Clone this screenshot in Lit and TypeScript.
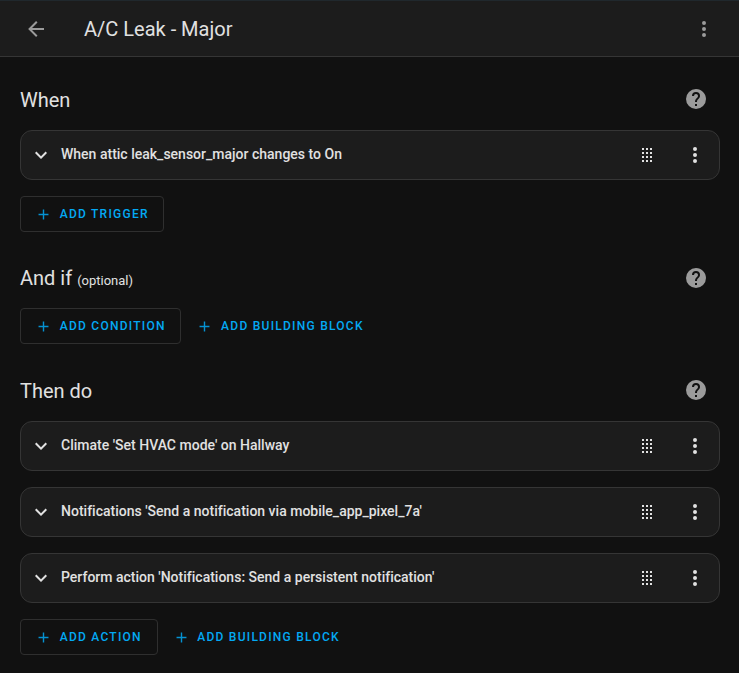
import { LitElement, html, css, svg, nothing } from "lit";
import { customElement, property } from "lit/decorators.js";

const ICONS: Record<string, string> = {
  back: "M20,11V13H8L13.5,18.5L12.08,19.92L4.16,12L12.08,4.08L13.5,5.5L8,11H20Z",
  dots: "M12,16A2,2 0 0,1 14,18A2,2 0 0,1 12,20A2,2 0 0,1 10,18A2,2 0 0,1 12,16M12,10A2,2 0 0,1 14,12A2,2 0 0,1 12,14A2,2 0 0,1 10,12A2,2 0 0,1 12,10M12,4A2,2 0 0,1 14,6A2,2 0 0,1 12,8A2,2 0 0,1 10,6A2,2 0 0,1 12,4Z",
  help: "M15.07,11.25L14.17,12.17C13.45,12.89 13,13.5 13,15H11V14.5C11,13.39 11.45,12.39 12.17,11.67L13.41,10.41C13.78,10.05 14,9.55 14,9C14,7.89 13.1,7 12,7A2,2 0 0,0 10,9H8A4,4 0 0,1 12,5A4,4 0 0,1 16,9C16,9.88 15.64,10.67 15.07,11.25M13,19H11V17H13M12,2A10,10 0 0,0 2,12A10,10 0 0,0 12,22A10,10 0 0,0 22,12C22,6.47 17.5,2 12,2Z",
  chevron: "M7.41,8.58L12,13.17L16.59,8.58L18,10L12,16L6,10L7.41,8.58Z",
  plus: "M19,13H13V19H11V13H5V11H11V5H13V11H19V13Z",
  drag: [5, 9, 13, 17]
    .flatMap((y) => [7, 11, 15].map((x) => `M${x},${y}h2v2h-2Z`))
    .join(""),
};

@customElement("ui-icon")
class UiIcon extends LitElement {
  @property() name = "";
  static styles = css`
    :host { display: block; flex: none; width: 24px; height: 24px; }
    svg { display: block; width: 100%; height: 100%; fill: currentColor; }
  `;
  render() {
    return html`<svg viewBox="0 0 24 24">${svg`<path d=${ICONS[this.name]}></path>`}</svg>`;
  }
}

@customElement("automation-row")
class AutomationRow extends LitElement {
  @property() label = "";
  static styles = css`
    :host {
      display: flex; align-items: center; box-sizing: border-box; height: 50px;
      padding: 0 12px 0 8px; border: 1px solid #353535; border-radius: 12px;
      background: #1c1c1c; color: #e1e1e1;
    }
    .label {
      flex: 1; margin: 0 0 2px 8px; font-size: 14px; font-weight: 500; line-height: 20px;
      letter-spacing: 0.006px; white-space: nowrap;
    }
    .drag { margin-right: 24px; }
  `;
  render() {
    return html`
      <ui-icon name="chevron"></ui-icon>
      <span class="label">${this.label}</span>
      <ui-icon class="drag" name="drag"></ui-icon>
      <ui-icon name="dots"></ui-icon>
    `;
  }
}

@customElement("add-button")
class AddButton extends LitElement {
  @property() label = "";
  static styles = css`
    :host {
      display: inline-flex; align-items: center; box-sizing: border-box; height: 36px;
      padding: 0 14.7px 0 14px; border: 1px solid transparent; border-radius: 4px;
      color: #03a9f4; font-size: 12px; font-weight: 500; letter-spacing: 1.25px;
      white-space: nowrap;
    }
    :host([outlined]) { border-color: #2f2f2f; }
    ui-icon { width: 17px; height: 17px; margin-right: 7.7px; opacity: 0.85; }
  `;
  render() {
    return html`<ui-icon name="plus"></ui-icon><span>${this.label}</span>`;
  }
}

interface Section {
  title: string;
  note?: string;
  rows: string[];
  buttons: string[];
}

const SECTIONS: Section[] = [
  { title: "When", rows: ["When attic leak_sensor_major changes to On"], buttons: ["ADD TRIGGER"] },
  { title: "And if", note: "(optional)", rows: [], buttons: ["ADD CONDITION", "ADD BUILDING BLOCK"] },
  {
    title: "Then do",
    rows: [
      "Climate 'Set HVAC mode' on Hallway",
      "Notifications 'Send a notification via mobile_app_pixel_7a'",
      "Perform action 'Notifications: Send a persistent notification'",
    ],
    buttons: ["ADD ACTION", "ADD BUILDING BLOCK"],
  },
];

@customElement("app-root")
class AppRoot extends LitElement {
  static styles = css`
    :host {
      display: block; box-sizing: border-box; height: 673px; overflow: hidden;
      border-top: 1px solid #20282d; background: #111111; color: #e1e1e1;
      font-family: Roboto, "Noto Sans", sans-serif;
    }
    header {
      display: flex; align-items: center; box-sizing: border-box; height: 56px;
      padding: 0 23px 0 24px; border-bottom: 1px solid #353535; background: #1c1c1c;
      color: #9b9b9b;
    }
    h1 {
      flex: 1; margin: 0 0 0 36px; color: #e1e1e1; font-size: 20px; font-weight: 400;
      line-height: 24px;
    }
    main { padding: 0 19px 0 20px; }
    section { padding-top: 22px; }
    section:first-child { padding-top: 18px; }
    .heading {
      display: flex; align-items: center; height: 48px; margin-bottom: 6px;
      padding-right: 12px;
    }
    section:not(.bare) .heading { margin-bottom: 7px; }
    .heading ui-icon { color: #9b9b9b; }
    h2 { flex: 1; margin: 1px 0 0; font-size: 20px; font-weight: 400; line-height: 24px; }
    .bare h2 { margin-top: 0; }
    .note { font-size: 13px; line-height: 1; }
    .rows { display: grid; gap: 16px; margin-bottom: 16px; }
    .buttons { display: flex; }
  `;
  render() {
    return html`
      <header>
        <ui-icon name="back"></ui-icon>
        <h1>A/C Leak - Major</h1>
        <ui-icon name="dots"></ui-icon>
      </header>
      <main>
        ${SECTIONS.map(
          (s) => html`<section class=${s.rows.length ? "" : "bare"}>
            <div class="heading">
              <h2>${s.title}${s.note ? html` <span class="note">${s.note}</span>` : nothing}</h2>
              <ui-icon name="help"></ui-icon>
            </div>
            ${s.rows.length
              ? html`<div class="rows">
                  ${s.rows.map((r) => html`<automation-row .label=${r}></automation-row>`)}
                </div>`
              : nothing}
            <div class="buttons">
              ${s.buttons.map(
                (b, i) => html`<add-button ?outlined=${i === 0} .label=${b}></add-button>`
              )}
            </div>
          </section>`
        )}
      </main>
    `;
  }
}
